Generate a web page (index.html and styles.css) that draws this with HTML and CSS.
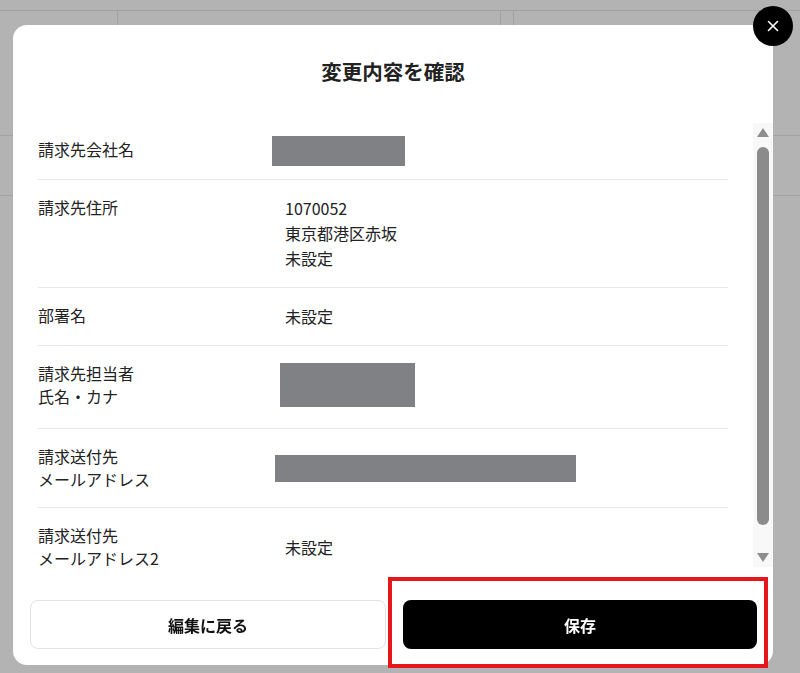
FILE: index.html
```html
<!DOCTYPE html>
<html lang="ja">
<head>
  <meta charset="UTF-8" />
  <title>変更内容を確認</title>
  <meta name="viewport" content="width=device-width, initial-scale=1.0" />
  <link rel="stylesheet" href="styles.css">
</head>
<body>

  <!-- page behind the dialog (greyed out) -->
  <div class="page">
    <div class="page-top"></div>
    <div class="page-head">
      <div class="page-cell cell-a"></div>
      <div class="page-cell cell-b"></div>
      <div class="page-cell cell-c"></div>
      <div class="page-cell cell-d"></div>
    </div>
    <div class="page-row"></div>
  </div>

  <div class="overlay">
    <div class="modal">
      <button class="close-btn" title="閉じる">
        <svg width="12" height="12" viewBox="0 0 12 12">
          <path d="M1.5 1.5 L10.5 10.5 M10.5 1.5 L1.5 10.5" stroke="#fff" stroke-width="1.6" stroke-linecap="round" />
        </svg>
      </button>

      <h2 class="modal-title">変更内容を確認</h2>

      <div class="modal-body">
        <div class="detail-list">
          <div class="detail-row">
            <div class="detail-label">請求先会社名</div>
            <div class="detail-value"><div class="redact redact-company"></div></div>
          </div>
          <div class="detail-row">
            <div class="detail-label">請求先住所</div>
            <div class="detail-value value-text">
              1070052<br>
              東京都港区赤坂<br>
              未設定
            </div>
          </div>
          <div class="detail-row">
            <div class="detail-label">部署名</div>
            <div class="detail-value value-text">未設定</div>
          </div>
          <div class="detail-row">
            <div class="detail-label">請求先担当者<br>氏名・カナ</div>
            <div class="detail-value"><div class="redact redact-person"></div></div>
          </div>
          <div class="detail-row">
            <div class="detail-label">請求送付先<br>メールアドレス</div>
            <div class="detail-value"><div class="redact redact-mail"></div></div>
          </div>
          <div class="detail-row">
            <div class="detail-label">請求送付先<br>メールアドレス2</div>
            <div class="detail-value value-text">未設定</div>
          </div>
        </div>

        <!-- scrollbar -->
        <div class="scrollbar">
          <span class="arrow arrow-up"></span>
          <span class="thumb"></span>
          <span class="arrow arrow-down"></span>
        </div>
      </div>

      <div class="modal-footer">
        <button class="btn btn-outline">編集に戻る</button>
        <button class="btn btn-primary">保存</button>
      </div>

      <div class="highlight"></div>
    </div>
  </div>

</body>
</html>
```

FILE: styles.css
```css
/* Reset & base */
* {
  box-sizing: border-box;
}
body, html {
  margin: 0; padding: 0; height: 100%;
  font-family: "Noto Sans CJK JP", "Noto Sans", sans-serif;
  background: #b3b3b3;
  color: #222;
  overflow: hidden;
}

/* Background page */
.page-top {
  height: 11px;
  border-bottom: 1px solid #a2a2a2;
}
.page-head {
  display: flex;
  height: 125px;
  border-bottom: 1px solid #a2a2a2;
}
.page-cell {
  border-right: 1px solid #a2a2a2;
}
.cell-a { width: 118px; }
.cell-b { width: 383px; }
.cell-c { width: 13px; }
.cell-d { flex: 1; border-right: none; }
.page-row {
  height: 60px;
  border-bottom: 1px solid #a2a2a2;
}

/* Dialog */
.overlay {
  position: fixed;
  top: 0; left: 0; right: 0; bottom: 0;
}
.modal {
  position: relative;
  margin: 25px 0 0 13px;
  width: 760px;
  height: 640px;
  background: #fff;
  border-radius: 14px;
  display: flex;
  flex-direction: column;
}

.close-btn {
  position: absolute;
  top: -19px;
  left: 740px;
  width: 40px;
  height: 40px;
  border-radius: 50%;
  border: none;
  background: #000;
  display: flex;
  align-items: center;
  justify-content: center;
  padding: 0;
  cursor: pointer;
}

.modal-title {
  margin: 0;
  padding: 32px 0 38px;
  height: 98px;
  text-align: center;
  font-size: 20.5px;
  line-height: 28px;
  font-weight: 700;
  color: #222;
}

.modal-body {
  display: flex;
  height: 448px;
}

.detail-list {
  flex: 1;
  overflow: hidden;
  padding: 0 25px;
}

.detail-row {
  display: flex;
  padding: 16px 0;
  border-bottom: 1px solid #e8e8e8;
}
.detail-row:first-child {
  padding-top: 15px;
}

.detail-label {
  width: 247px;
  flex-shrink: 0;
  align-self: flex-start;
  font-size: 16px;
  line-height: 23px;
}
.detail-value {
  align-self: center;
}
.value-text {
  font-size: 16px;
  line-height: 25px;
}

/* Hidden data boxes */
.redact {
  background: #808185;
}
.redact-company {
  width: 133px;
  height: 30px;
  margin: -2px 0 -3px -13px;
}
.redact-person {
  width: 135px;
  height: 44px;
  margin: 1px 0 5px -5px;
}
.redact-mail {
  width: 301px;
  height: 27px;
  margin-left: -10px;
}

/* Scrollbar */
.scrollbar {
  width: 20px;
  height: 444px;
  background: #f8f8f8;
  display: flex;
  flex-direction: column;
  align-items: center;
}
.arrow {
  width: 0;
  height: 0;
  border-left: 6px solid transparent;
  border-right: 6px solid transparent;
}
.arrow-up {
  margin-top: 5px;
  border-bottom: 9px solid #8e8e8e;
}
.arrow-down {
  margin-top: auto;
  margin-bottom: 5px;
  border-top: 9px solid #8e8e8e;
}
.thumb {
  margin-top: 10px;
  width: 12px;
  height: 378px;
  border-radius: 6px;
  background: #8b8b8b;
}

/* Footer buttons */
.modal-footer {
  display: flex;
  gap: 17px;
  padding: 29px 16px 16px 17px;
}
.btn {
  flex: 1;
  height: 49px;
  border-radius: 8px;
  font-family: inherit;
  font-size: 16px;
  font-weight: 700;
  cursor: pointer;
}
.btn-outline {
  background: #fff;
  border: 1px solid #e2e2e2;
  color: #111;
}
.btn-primary {
  background: #000;
  border: none;
  color: #fff;
}

/* Red annotation frame */
.highlight {
  position: absolute;
  left: 375px;
  top: 552px;
  width: 380px;
  height: 91px;
  border: 4px solid #e3171c;
}
```
